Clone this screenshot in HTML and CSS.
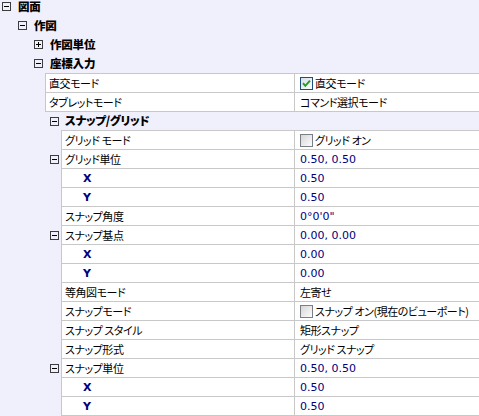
FILE: index.html
```html
<!DOCTYPE html>
<html lang="ja">
<head>
<meta charset="utf-8">
<link rel="stylesheet" href="styles.css">
</head>
<body>
<div class="tree">
  <div class="hd l0"><i class="tg"></i><b>図面</b></div>
  <div class="hd l1"><i class="tg"></i><b>作図</b></div>
  <div class="hd l2"><i class="tg plus"></i><b>作図単位</b></div>
  <div class="hd l2"><i class="tg"></i><b>座標入力</b></div>

  <div class="pr g45 first"><span class="gut"></span><span class="nm">直交モード</span><span class="vl"><svg class="cb on" width="13" height="13" viewBox="0 0 13 13"><defs><linearGradient id="gf" x1="0" y1="0" x2="1" y2="1"><stop offset="0" stop-color="#d8dde2"/><stop offset="1" stop-color="#ffffff"/></linearGradient></defs><rect x="0.5" y="0.5" width="12" height="12" fill="url(#gf)" stroke="#1c4f7c"/><path d="M3 6.2 L5.3 8.8 L10 3.6" fill="none" stroke="#21a121" stroke-width="2"/></svg>直交モード</span></div>
  <div class="pr g45"><span class="gut"></span><span class="nm">タブレットモード</span><span class="vl">コマンド選択モード</span></div>

  <div class="grp"><i class="tg"></i><b>スナップ/グリッド</b></div>

  <div class="pr g61 first"><span class="gut"></span><span class="nm">グリッド モード</span><span class="vl"><svg class="cb" width="13" height="13" viewBox="0 0 13 13"><defs><linearGradient id="gu" x1="0" y1="0" x2="1" y2="1"><stop offset="0" stop-color="#d4d4d4"/><stop offset="1" stop-color="#ffffff"/></linearGradient></defs><rect x="0.5" y="0.5" width="12" height="12" fill="url(#gu)" stroke="#7a7f85"/></svg>グリッド オン</span></div>
  <div class="pr g61"><span class="gut"><i class="tg"></i></span><span class="nm">グリッド単位</span><span class="vl"><span class="num">0.50, 0.50</span></span></div>
  <div class="pr g61"><span class="gut"></span><span class="nm sub"><span class="xy">X</span></span><span class="vl"><span class="num">0.50</span></span></div>
  <div class="pr g61"><span class="gut"></span><span class="nm sub"><span class="xy">Y</span></span><span class="vl"><span class="num">0.50</span></span></div>
  <div class="pr g61"><span class="gut"></span><span class="nm">スナップ角度</span><span class="vl"><span class="num">0°0'0"</span></span></div>
  <div class="pr g61"><span class="gut"><i class="tg"></i></span><span class="nm">スナップ基点</span><span class="vl"><span class="num">0.00, 0.00</span></span></div>
  <div class="pr g61"><span class="gut"></span><span class="nm sub"><span class="xy">X</span></span><span class="vl"><span class="num">0.00</span></span></div>
  <div class="pr g61"><span class="gut"></span><span class="nm sub"><span class="xy">Y</span></span><span class="vl"><span class="num">0.00</span></span></div>
  <div class="pr g61"><span class="gut"></span><span class="nm">等角図モード</span><span class="vl">左寄せ</span></div>
  <div class="pr g61"><span class="gut"></span><span class="nm">スナップモード</span><span class="vl"><svg class="cb" width="13" height="13" viewBox="0 0 13 13"><rect x="0.5" y="0.5" width="12" height="12" fill="url(#gu)" stroke="#7a7f85"/></svg>スナップ オン(現在のビューポート)</span></div>
  <div class="pr g61"><span class="gut"></span><span class="nm">スナップ スタイル</span><span class="vl">矩形スナップ</span></div>
  <div class="pr g61"><span class="gut"></span><span class="nm">スナップ形式</span><span class="vl">グリッド スナップ</span></div>
  <div class="pr g61"><span class="gut"><i class="tg"></i></span><span class="nm">スナップ単位</span><span class="vl"><span class="num">0.50, 0.50</span></span></div>
  <div class="pr g61"><span class="gut"></span><span class="nm sub"><span class="xy">X</span></span><span class="vl"><span class="num">0.50</span></span></div>
  <div class="pr g61"><span class="gut"></span><span class="nm sub"><span class="xy">Y</span></span><span class="vl"><span class="num">0.50</span></span></div>
</div>
</body>
</html>
```

FILE: styles.css
```css
html, body {
  margin: 0;
  padding: 0;
}
body {
  width: 479px;
  height: 416px;
  overflow: hidden;
  background: #f0f0fc;
  color: #000;
  font-family: "Noto Sans CJK JP", sans-serif;
  font-size: 11px;
  letter-spacing: -0.45px;
  font-feature-settings: "palt";
  line-height: 1;
}
.tree {
  margin-top: -3px;
  display: flex;
  flex-direction: column;
}
.hd {
  height: 19px;
  display: flex;
  align-items: center;
  font-weight: bold;
  font-size: 11.5px;
  letter-spacing: -0.2px;
}
.l0 { padding-left: 2px; }
.l1 { padding-left: 18px; }
.l2 { padding-left: 34px; }
.tg {
  flex: none;
  width: 9px;
  height: 9px;
  box-sizing: border-box;
  border: 1px solid #3c3c3c;
  position: relative;
  margin-right: 7px;
}
.tg::before {
  content: "";
  position: absolute;
  left: 1px;
  top: 3px;
  width: 5px;
  height: 1px;
  background: #000;
}
.tg.plus::after {
  content: "";
  position: absolute;
  left: 3px;
  top: 1px;
  width: 1px;
  height: 5px;
  background: #000;
}
.grp {
  height: 18px;
  display: flex;
  align-items: center;
  padding-left: 50px;
  font-weight: bold;
  font-size: 11.5px;
  letter-spacing: -0.3px;
}
.grp .tg { margin-right: 6px; }
.pr {
  height: 19px;
  display: flex;
  box-sizing: border-box;
}
.pr.first { height: 20px; }
.gut {
  flex: none;
  display: flex;
  align-items: center;
}
.g45 .gut { width: 45px; }
.g61 .gut { width: 61px; }
.gut .tg { margin-left: 50px; margin-right: 0; }
.nm, .vl {
  display: flex;
  align-items: center;
  box-sizing: border-box;
  background: #fff;
  border-left: 1px solid #c8c8c8;
  border-bottom: 1px solid #c8c8c8;
  white-space: nowrap;
  overflow: hidden;
}
.first .nm, .first .vl { border-top: 1px solid #c8c8c8; }
.nm {
  flex: 1;
  padding-left: 3px;
}
.nm.sub { padding-left: 21px; }
.vl {
  flex: none;
  width: 185px;
  padding-left: 5px;
}
.cb {
  flex: none;
  margin-right: 2px;
  display: block;
}
.num, .xy {
  font-family: "DejaVu Sans", sans-serif;
  font-size: 11px;
  letter-spacing: 0;
  font-feature-settings: normal;
  color: #000080;
}
.xy { font-weight: bold; }
```
